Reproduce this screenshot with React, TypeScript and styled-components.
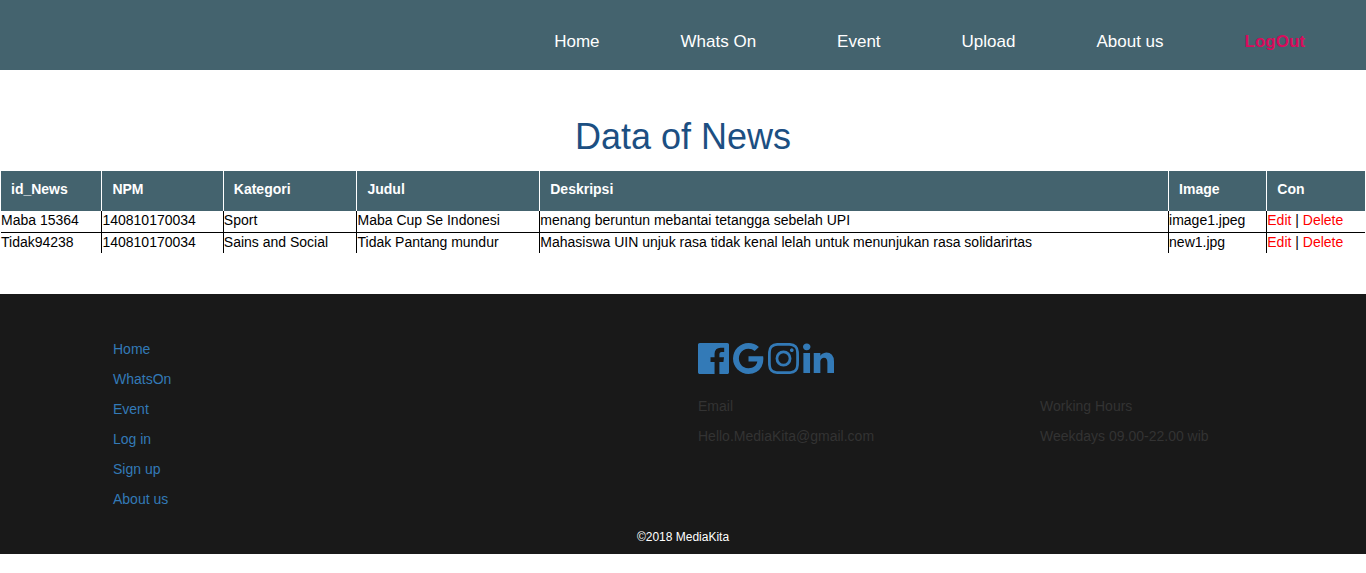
import React from "react";
import styled, { createGlobalStyle } from "styled-components";

const GlobalStyle = createGlobalStyle`
  *, *::before, *::after { box-sizing: border-box; }
  body {
    margin: 0;
    background: #fff;
    color: #333;
    font: 14px/20px "Liberation Sans", Arial, sans-serif;
  }
  a { text-decoration: none; }
`;

const Header = styled.header`
  display: flex;
  justify-content: flex-end;
  min-height: 70px;
  padding: 30px 61px 16px;
  background: #44636e;
`;

const Nav = styled.nav`
  display: flex;
  flex-wrap: wrap;
  gap: 0 81px;
`;

const NavLink = styled.a<{ $accent?: boolean }>`
  color: ${(p) => (p.$accent ? "#d90b5c" : "#fff")};
  font-size: 17px;
  line-height: 24px;
  font-weight: ${(p) => (p.$accent ? 700 : 400)};
`;

const Title = styled.h1`
  margin: 47px 0 14px;
  color: #1c4f82;
  font-size: 36px;
  font-weight: 400;
  line-height: 40px;
  text-align: center;
`;

const TableArea = styled.div`
  padding: 0 1px;
`;

const Table = styled.table`
  width: 100%;
  border-collapse: collapse;
  color: #000;
`;

const Column = styled.col<{ $share: number }>`
  width: ${(p) => p.$share}%;
`;

const HeadCell = styled.th`
  padding: 8px 10px 12px;
  background: #44636e;
  color: #fff;
  text-align: left;

  & + & { border-left: 1px solid #fff; }
`;

const Cell = styled.td`
  padding: 0 0 3px;
  line-height: 18px;

  & + & { border-left: 1px solid #000; }
  tr + tr > & { border-top: 1px solid #000; padding-bottom: 2px; }
`;

const ActionLink = styled.a`
  color: #f00;
`;

const Footer = styled.footer`
  margin-top: 41px;
  padding: 45px 0 7px;
  background: #191919;
`;

const FooterGrid = styled.div`
  display: grid;
  grid-template-columns: 1fr 1fr;
  max-width: 1170px;
  margin: 0 auto;
`;

const FooterColumn = styled.div`
  padding: 0 15px;
`;

const LinkList = styled.ul`
  display: grid;
  gap: 10px;
  margin: 0;
  padding: 0;
  list-style: none;
`;

const FooterLink = styled.a`
  color: #337ab7;
`;

const Socials = styled.div`
  display: flex;
  gap: 4px;
  padding: 4px 0 22px;
`;

const SocialLink = styled.a`
  display: block;
  color: #337ab7;

  svg { display: block; fill: currentColor; }
`;

const Contact = styled.div`
  display: grid;
  grid-template-columns: 342px 1fr;
`;

const Line = styled.p`
  margin: 0 0 10px;
`;

const Copyright = styled.p`
  margin: 18px 0 0;
  color: #fff;
  font-size: 12px;
  text-align: center;
`;

const navItems = ["Home", "Whats On", "Event", "Upload", "About us"];
const columns = [
  { label: "id_News", share: 7.4 },
  { label: "NPM", share: 8.9 },
  { label: "Kategori", share: 9.8 },
  { label: "Judul", share: 13.4 },
  { label: "Deskripsi", share: 46.1 },
  { label: "Image", share: 7.2 },
  { label: "Con", share: 7.2 },
];
const rows = [
  ["Maba 15364", "140810170034", "Sport", "Maba Cup Se Indonesi", "menang beruntun mebantai tetangga sebelah UPI", "image1.jpeg"],
  ["Tidak94238", "140810170034", "Sains and Social", "Tidak Pantang mundur", "Mahasiswa UIN unjuk rasa tidak kenal lelah untuk menunjukan rasa solidarirtas", "new1.jpg"],
];
const footerItems = ["Home", "WhatsOn", "Event", "Log in", "Sign up", "About us"];

const socials = [
  {
    name: "Facebook",
    viewBox: "128 128 1536 1536",
    path: "M1579 128q35 0 60 25t25 60v1366q0 35-25 60t-60 25h-391v-595h199l30-232h-229v-148q0-56 23.5-84t91.5-28l122-1v-207q-63-9-178-9-136 0-217.5 80t-81.5 226v171h-200v232h200v595h-735q-35 0-60-25t-25-60v-1366q0-35 25-60t60-25h1366z",
  },
  {
    name: "Google",
    viewBox: "128 128 1536 1536",
    path: "M896 786h725q12 67 12 128 0 217-91 387.5t-259.5 266.5-386.5 96q-157 0-299-60.5t-245-163.5-163.5-245-60.5-299 60.5-299 163.5-245 245-163.5 299-60.5q300 0 515 201l-209 201q-123-119-306-119-129 0-238.5 65t-173.5 176.5-64 243.5 64 243.5 173.5 176.5 238.5 65q87 0 160-24t120-60 82-82 51.5-87 22.5-78h-436v-264z",
  },
  {
    name: "Instagram",
    viewBox: "128 128 1536 1536",
    path: "M1152 896q0-106-75-181t-181-75-181 75-75 181 75 181 181 75 181-75 75-181zm138 0q0 164-115 279t-279 115-279-115-115-279 115-279 279-115 279 115 115 279zm108-410q0 38-27 65t-65 27-65-27-27-65 27-65 65-27 65 27 27 65zm-502-220q-7 0-76.5-.5t-105.5 0-96.5 3-103 10-71.5 18.5q-50 20-88 58t-58 88q-11 29-18.5 71.5t-10 103-3 96.5 0 105.5.5 76.5-.5 76.5 0 105.5 3 96.5 10 103 18.5 71.5q20 50 58 88t88 58q29 11 71.5 18.5t103 10 96.5 3 105.5 0 76.5-.5 76.5.5 105.5 0 96.5-3 103-10 71.5-18.5q50-20 88-58t58-88q11-29 18.5-71.5t10-103 3-96.5 0-105.5-.5-76.5.5-76.5 0-105.5-3-96.5-10-103-18.5-71.5q-20-50-58-88t-88-58q-29-11-71.5-18.5t-103-10-96.5-3-105.5 0-76.5.5zm768 630q0 229-5 317-10 208-124 322t-322 124q-88 5-317 5t-317-5q-208-10-322-124t-124-322q-5-88-5-317t5-317q10-208 124-322t322-124q88-5 317-5t317 5q208 10 322 124t124 322q5 88 5 317z",
  },
  {
    name: "LinkedIn",
    viewBox: "128 128 1536 1536",
    path: "M477 625v991h-330v-991h330zm21-306q1 73-50.5 122t-135.5 49h-2q-82 0-132-49t-50-122q0-74 51.5-122.5t134.5-48.5 133 48.5 51 122.5zm1166 729v568h-329v-530q0-105-40.5-164.5t-126.5-59.5q-63 0-105.5 34.5t-63.5 85.5q-11 30-11 81v553h-329q2-399 2-647t-1-296l-1-48h329v144h-2q20-32 41-56t56.5-52 87-43.5 114.5-15.5q171 0 275 113.5t104 332.5z",
  },
];

export default function App() {
  return (
    <>
      <GlobalStyle />
      <Header>
        <Nav aria-label="Main">
          {navItems.map((item) => (
            <NavLink key={item} href="#">{item}</NavLink>
          ))}
          <NavLink href="#" $accent>LogOut</NavLink>
        </Nav>
      </Header>
      <main>
        <Title>Data of News</Title>
        <TableArea>
          <Table>
            <colgroup>
              {columns.map((c) => (
                <Column key={c.label} $share={c.share} />
              ))}
            </colgroup>
            <thead>
              <tr>
                {columns.map((c) => (
                  <HeadCell key={c.label} scope="col">{c.label}</HeadCell>
                ))}
              </tr>
            </thead>
            <tbody>
              {rows.map((row) => (
                <tr key={row[0]}>
                  {row.map((value, i) => (
                    <Cell key={i}>{value}</Cell>
                  ))}
                  <Cell>
                    <ActionLink href="#">Edit</ActionLink> | <ActionLink href="#">Delete</ActionLink>
                  </Cell>
                </tr>
              ))}
            </tbody>
          </Table>
        </TableArea>
      </main>
      <Footer>
        <FooterGrid>
          <FooterColumn>
            <LinkList>
              {footerItems.map((item) => (
                <li key={item}>
                  <FooterLink href="#">{item}</FooterLink>
                </li>
              ))}
            </LinkList>
          </FooterColumn>
          <FooterColumn>
            <Socials>
              {socials.map((s) => (
                <SocialLink key={s.name} href="#" aria-label={s.name}>
                  <svg width={31} height={31} viewBox={s.viewBox} aria-hidden="true">
                    <path d={s.path} />
                  </svg>
                </SocialLink>
              ))}
            </Socials>
            <Contact>
              <div>
                <Line>Email</Line>
                <Line>Hello.MediaKita@gmail.com</Line>
              </div>
              <div>
                <Line>Working Hours</Line>
                <Line>Weekdays 09.00-22.00 wib</Line>
              </div>
            </Contact>
          </FooterColumn>
        </FooterGrid>
        <Copyright>©2018 MediaKita</Copyright>
      </Footer>
    </>
  );
}
